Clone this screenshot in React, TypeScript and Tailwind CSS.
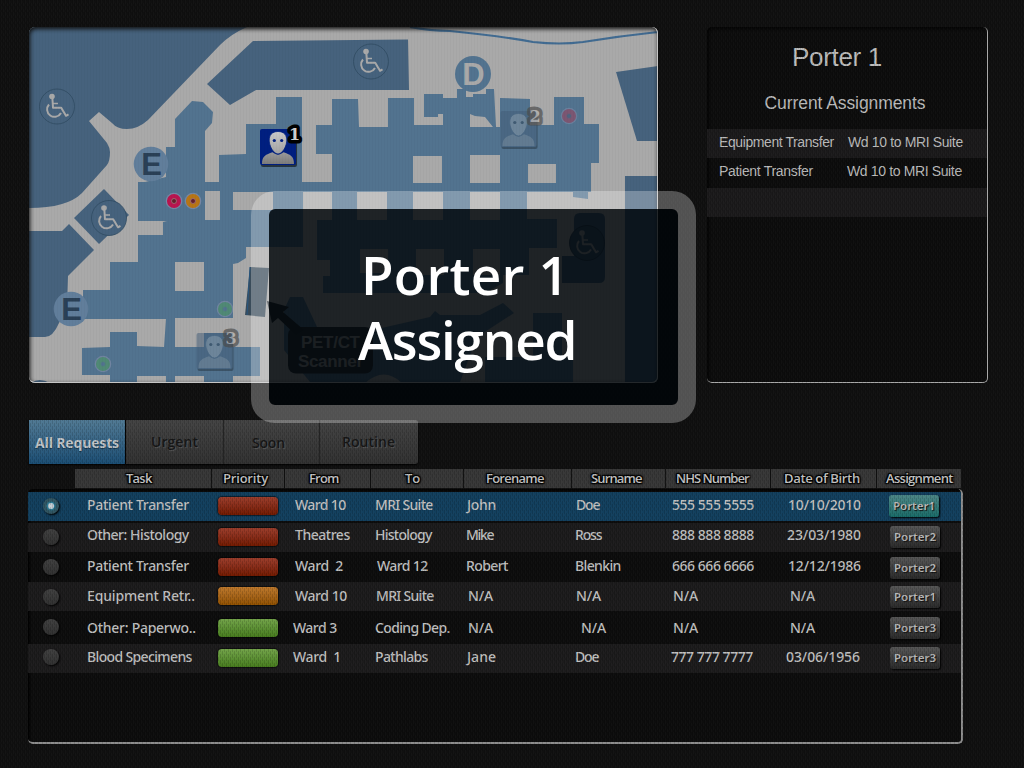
import { useLayoutEffect, useRef, useState } from "react";

/** Text whose tracking is adjusted so that it fills `w` pixels. */
function Fit({ text, w, className = "" }: { text: string; w: number; className?: string }) {
  const ref = useRef<HTMLSpanElement>(null);
  const [tracking, setTracking] = useState(0);
  useLayoutEffect(() => {
    const el = ref.current;
    if (!el) return;
    el.style.letterSpacing = "0px";
    const natural = el.getBoundingClientRect().width;
    setTracking((w - natural) / Math.max(1, text.length - 0.5));
    el.style.letterSpacing = "";
  }, [text, w]);
  return (
    <span ref={ref} className={"inline-block whitespace-pre " + className} style={{ letterSpacing: tracking + "px" }}>
      {text}
    </span>
  );
}

const sans = "font-['Open_Sans','Noto_Sans',sans-serif]";
const arial = "font-['Liberation_Sans',Arial,sans-serif]";

function Wheelchair({ x, y, fill, color, ring }: { x: number; y: number; fill: string; color: string; ring: string }) {
  return (
    <g transform={`translate(${x} ${y})`} fill="none" stroke={color}>
      <circle r="17.5" fill={fill} stroke={ring} strokeWidth="0.8" />
      <circle cx="-5" cy="-10" r="2.8" fill={color} stroke="none" />
      <path d="M-4.6 -8 L-4 1.2 H4.2 L9 9.3 L11.5 7.8" strokeWidth="2" strokeLinejoin="round" />
      <path d="M-4.5 -3 H1" strokeWidth="1.6" />
      <path d="M-8 -2 A7.4 7.4 0 1 0 4 6.5" strokeWidth="2" />
    </g>
  );
}

function Porter({ x, y, n, active = false }: { x: number; y: number; n: string; active?: boolean }) {
  const bg = active ? "#001f80" : "#435d78";
  return (
    <g transform={`translate(${x} ${y})`}>
      <g opacity={active ? 1 : 0.5}>
        <rect x="1" y="2" width="36" height="36" rx="2" fill="#000" opacity="0.55" />
        <rect width="36" height="36" rx="2" fill={bg} />
        <path
          d="M2 35 C2 27 6 25.500 12.500 23.300 Q18 28 23.500 23.300 C30 25.500 34 27 34 35Z"
          fill={active ? "url(#body)" : "#738494"}
        />
        <path
          d="M18 2.500 C24 2.500 27 6 26.800 12 C26.600 16 24.500 20.500 22 23 Q18 27 14 23 C11.500 20.500 9.400 16 9.200 12 C9 6 12 2.500 18 2.500Z"
          fill={active ? "url(#face)" : "#8897a5"}
          stroke={bg}
          strokeWidth="0.800"
        />
        <circle cx="14.300" cy="11.500" r="1.600" fill={active ? "#001f80" : "#2d4257"} />
        <circle cx="21.700" cy="11.500" r="1.600" fill={active ? "#001f80" : "#2d4257"} />
      </g>
      <g opacity={active ? 1 : 0.68}>
        <text
          x="34.500"
          y="11"
          textAnchor="middle"
          fontFamily="DejaVu Serif"
          fontWeight="bold"
          fontSize="16"
          fill={active ? "#d0d0d0" : "#b5b5b5"}
          stroke={active ? "#000" : "#4c4c4c"}
          strokeWidth="7"
          strokeLinejoin="round"
          paintOrder="stroke"
        >
          {n}
        </text>
      </g>
    </g>
  );
}

function Dot({ x, y, ring, core, hub = "#a7757c", opacity = 1 }: { x: number; y: number; ring: string; core: string; hub?: string; opacity?: number }) {
  return (
    <g opacity={opacity}>
      <circle cx={x} cy={y} r="8.300" fill="#c9b6d8" opacity="0.300" />
      <circle cx={x} cy={y} r="4.800" fill={core} stroke={ring} strokeWidth="4.500" />
      <circle cx={x} cy={y} r="2.500" fill="none" stroke={hub} strokeWidth="0.800" />
    </g>
  );
}

function Letter({ x, y, c, r = 17.300, bg, fg }: { x: number; y: number; c: string; r?: number; bg: string; fg: string }) {
  return (
    <g>
      <circle cx={x} cy={y} r={r} fill={bg} />
      <text x={x + 0.5} y={y + 11} textAnchor="middle" fontFamily="Liberation Sans" fontWeight="bold" fontSize="31" fill={fg}>
        {c}
      </text>
    </g>
  );
}

function FloorMap() {
  const land = "#a9a9a9";
  const mid = "#52738f";
  const dark = "#46627d";
  return (
    <svg className="block h-full w-full" viewBox="29 27 629 356" preserveAspectRatio="none">
      <defs>
        <linearGradient id="face" x1="0" y1="0" x2="0" y2="1">
          <stop offset="0" stopColor="#c9c9c9" />
          <stop offset="1" stopColor="#a2a2a2" />
        </linearGradient>
        <linearGradient id="body" x1="0" y1="0" x2="0" y2="1">
          <stop offset="0" stopColor="#9b9b9b" />
          <stop offset="1" stopColor="#7b7b7b" />
        </linearGradient>
      </defs>
      <rect x="29" y="27" width="629" height="356" fill={land} />
      <path d="M29 27H247Q231 34 220 45L148 120Q138 129 127 129Q117 129 112 123L99 112L89 121L107 143Q110 148 110 152Q110 161 107 165L82 193Q67 208 29 208Z" fill={dark} />
      <path d="M207 84L253 41L408 39.500L409 90H256L230 105Z" fill={dark} />
      <path d="M74 218L104 189L129 215L99 244Z" fill={dark} />
      <path d="M29 231H62L69 224L94 250L68 276L67 308L59 323Q53 337 45 337H29Z" fill={dark} />
      <path d="M31 383Q39 377 50 383Z" fill={dark} />
      <path d="M410 27Q430 31 450 31Q500 36 533 42Q560 45 583 42Q620 36 658 32" fill="none" stroke="#416b91" strokeWidth="2.200" />
      <path d="M616 72L658 66V141H637Z" fill={dark} />
      <path d="M625 176H658V383H625Z" fill={dark} />
      <path
        d="M175 119L192 101L203 102L213 112L212 123L205 131V182H219V155L246 154V124H276V97H302V182H332V154H316V125H332V99H358L359 127H388V98H414V125H443V114H438V117H424V94H443V98H457V89H466V97H473V94H486V89H494L496 127H500V98L530 99V125H554V97H584V124H599V163H591V192H588V199L573 197V192H527V219H557V248H529V275H503V283L485 293H323V276H330V260H317V220H332V192H303V247H246V258L238 263L233 264V318H175V347H204V333H233V347H260V376H233V383H204V376H175V383H166V376H137V383H110V375H82V348L110 347V332H137V346L164 347L166 319H83V290H110V262H138V235H163V222L167 221H138V182H145L166 177V147H175Z"
        fill={mid}
      />
      <g fill={land}>
        <path d="M205 191H220V220H205ZM175 262H204V291H175ZM233 192H273V210H233ZM413 156H442V183H413ZM470 155H500V183H470ZM528 164H556V183H528Z" />
        <path d="M470 114L475 116L485 117L493 127H470Z" />
        <path d="M357 192H387V220H357ZM413 192H443V220H413ZM470 192H500V220H470ZM360 249H388V273H360ZM416 249H444V275H416ZM473 249H500V275H473Z" />
      </g>
      <path d="M250 267L269 268L265 317L245 315Z" fill="#3a4c5a" />
      <path d="M250 267L247 315" stroke="#28567f" strokeWidth="1" />
      <path d="M290 297H303L317 327L373 330L430 317L435 311L440 315H480L503 303L514 313L477 337L460 382H310L284 350V310Z" fill={mid} />
      <path d="M533 313H562V357H573V382H485V357H533Z" fill={mid} />
      <path d="M365 383Q384 366 402 383Z" fill={land} />
      <rect x="288" y="327" width="85" height="46.500" rx="8" fill="#2a3036" />
      <path d="M267 301L289 307L283 312L304 330L296 335L278 318L272 323Z" fill="#22292e" />
      <g fontFamily="Liberation Sans" fontWeight="bold" fontSize="17" fill="#989898">
        <text x="301" y="348" textLength="59">PET/CT</text>
        <text x="298" y="367" textLength="65">Scanner</text>
      </g>
      <path d="M580 213H599Q605 213 605 219V277Q605 283 599 283H562V256H574V219Q574 213 580 213Z" fill={dark} />
      <Wheelchair x={57} y={106.500} fill="#46627d" ring="#304b62" color="#a9a9a9" />
      <Wheelchair x={371} y={61.500} fill="#46627d" ring="#304b62" color="#a9a9a9" />
      <Wheelchair x={109} y={218} fill="#46627d" ring="#304b62" color="#a9a9a9" />
      <Wheelchair x={587} y={243} fill="#3b546c" ring="#26394a" color="#a0a0a0" />
      <Letter x={151} y={164} c="E" bg="#617e9b" fg="#2a4056" />
      <Letter x={71} y={309} c="E" bg="#617e9b" fg="#2a4056" />
      <Letter x={473} y={74} c="D" r={18} bg="#52738f" fg="#a9a9a9" />
      <Dot x={174} y={201} ring="#b9144f" core="#63202c" />
      <Dot x={193} y={201} ring="#b77516" core="#63202c" />
      <Dot x={569} y={116} ring="#8f4a66" core="#4b5e7c" hub="#86506a" opacity={0.700} />
      <Dot x={225} y={309} ring="#508d71" core="#52738f" hub="#508d71" opacity={0.850} />
      <Dot x={103} y={364} ring="#508d71" core="#52738f" hub="#508d71" opacity={0.850} />
      <Porter x={260} y={129} n="1" active />
      <Porter x={500.500} y={111} n="2" />
      <Porter x={196.500} y={333} n="3" />
    </svg>
  );
}

const columns = [
  { label: "Task", w: 26, left: 51, col: 137 },
  { label: "Priority", w: 45, left: 11, col: 73 },
  { label: "From", w: 30, left: 24, col: 86 },
  { label: "To", w: 15, left: 34, col: 93 },
  { label: "Forename", w: 58, left: 22, col: 108 },
  { label: "Surname", w: 51, left: 19, col: 94 },
  { label: "NHS Number", w: 73, left: 10, col: 105 },
  { label: "Date of Birth", w: 76, left: 13, col: 106 },
  { label: "Assignment", w: 67, left: 9, col: 84 },
];

type Cell = [text: string, indent: number, width: number];
type Row = { cls: string; text: string; pill: string; btn: string; radio: string; color: "red" | "amber" | "green"; cells: Cell[]; porter: string; on?: boolean };

const rows: Row[] = [
  { cls: "mt-0.5 h-[29px] bg-[#123f5d]", text: "pt-[3px]", pill: "mt-[5px]", btn: "mt-[3px]", radio: "mt-[6px]", color: "red", on: true, porter: "Porter1",
    cells: [["Patient Transfer", 0, 102], ["Ward 10", 2, 51], ["MRI Suite", 0, 58], ["John", 1, 29], ["Doe", 1, 24], ["555 555 5555", 1, 82], ["10/10/2010", 2, 73]] },
  { cls: "mt-0.5 h-[29px] bg-[#1c1b1c]", text: "pt-[2px]", pill: "mt-[5px]", btn: "mt-[3px]", radio: "mt-[6px]", color: "red", porter: "Porter2",
    cells: [["Other: Histology", 0, 102], ["Theatres", 2, 55], ["Histology", 0, 57], ["Mike", 0, 28], ["Ross", 0, 27], ["888 888 8888", 1, 82], ["23/03/1980", 1, 74]] },
  { cls: "h-[30px]", text: "pt-[4px]", pill: "mt-[6px]", btn: "mt-[5px]", radio: "mt-[7px]", color: "red", porter: "Porter2",
    cells: [["Patient Transfer", 0, 102], ["Ward  2", 2, 48], ["Ward 12", 2, 51], ["Robert", 0, 42], ["Blenkin", 0, 46], ["666 666 6666", 1, 82], ["12/12/1986", 2, 73]] },
  { cls: "h-[29px] bg-[#1c1b1c]", text: "pt-[4px]", pill: "mt-[5px]", btn: "mt-[4px]", radio: "mt-[7px]", color: "amber", porter: "Porter1",
    cells: [["Equipment Retr..", 0, 108], ["Ward 10", 2, 52], ["MRI Suite", 1, 58], ["N/A", 2, 25], ["N/A", 1, 25], ["N/A", 2, 25], ["N/A", 4, 25]] },
  { cls: "h-[33px]", text: "pt-[7px]", pill: "mt-[8px]", btn: "mt-[6px]", radio: "mt-[8px]", color: "green", porter: "Porter3",
    cells: [["Other: Paperwo..", 0, 109], ["Ward 3", 0, 44], ["Coding Dep.", 0, 75], ["N/A", 2, 25], ["N/A", 6, 25], ["N/A", 2, 25], ["N/A", 4, 25]] },
  { cls: "h-[29px] bg-[#1c1b1c]", text: "pt-[3px]", pill: "mt-[5px]", btn: "mt-[3px]", radio: "mt-[5px]", color: "green", porter: "Porter3",
    cells: [["Blood Specimens", 0, 105], ["Ward  1", 0, 48], ["Pathlabs", 0, 53], ["Jane", 1, 29], ["Doe", 0, 24], ["777 777 7777", 0, 82], ["03/06/1956", 0, 74]] },
];

const pillColors = {
  red: "from-[#9b3d2b] to-[#711900]",
  amber: "from-[#bd782b] to-[#8f5000]",
  green: "from-[#72a349] to-[#467b1d]",
};

function TextCell({ cell, pad }: { cell: Cell; pad: string }) {
  return (
    <div className={pad} style={{ marginLeft: cell[1] }}>
      <Fit text={cell[0]} w={cell[2]} />
    </div>
  );
}

export default function App() {
  return (
    <div className={"relative h-[768px] w-[1024px] overflow-hidden bg-[#101010] " + sans}>
      <div className="flex justify-between pt-[27px] pr-9 pl-[29px]">
        <div className="h-[356px] w-[629px] overflow-hidden rounded-md">
          <FloorMap />
        </div>
        <section className={"h-[356px] w-[281px] rounded-[5px] border-r border-b border-[#a9a9a9] bg-[#0d0d0d] text-[#bcbcbc] shadow-[inset_2px_2px_3px_#050505] " + arial}>
          <div className="flex h-[102px] flex-col items-center pt-4 pr-5">
            <h1 className="text-[26px] leading-7">
              <Fit text="Porter 1" w={90} />
            </h1>
            <h2 className="mt-[22px] ml-4 text-[17.5px] leading-5">
              <Fit text="Current Assignments" w={161} />
            </h2>
          </div>
          <div className="grid h-[29px] grid-cols-[129px_1fr] justify-items-start bg-[#1b1a1b] pt-[3px] pl-3 text-[14px] leading-5">
            <Fit text="Equipment Transfer" w={115} />
            <Fit text="Wd 10 to MRI Suite" w={115} />
          </div>
          <div className="grid h-[30px] grid-cols-[128px_1fr] justify-items-start pt-[3px] pl-3 text-[14px] leading-5">
            <Fit text="Patient Transfer" w={94} />
            <Fit text="Wd 10 to MRI Suite" w={115} />
          </div>
          <div className="h-[29px] bg-[#1b1a1b]" />
        </section>
      </div>

      <nav className="mt-[37px] ml-[29px] flex h-11 w-[389px] overflow-hidden rounded-r-[3px] bg-gradient-to-b from-[#434343] to-[#313131] text-[14px] leading-5 font-semibold text-[#161616] shadow-[0_1px_2px_#000] [text-shadow:1px_1px_1px_#575757]">
        <div className="w-[97px] border-r border-black bg-gradient-to-b from-[#507993] to-[#1a4d73] pt-[13px] pl-1.5 font-bold text-[#c0c5c9] [text-shadow:0_1px_1px_#17354a]">
          <Fit text="All Requests" w={84} />
        </div>
        <div className="w-[98px] border-r border-[#222] pt-3 pl-[25px]">
          <Fit text="Urgent" w={47} />
        </div>
        <div className="w-[96px] border-r border-[#222] pt-[13px] pl-7">
          <Fit text="Soon" w={33} />
        </div>
        <div className="flex-1 pt-3 pl-[22px]">
          <Fit text="Routine" w={53} />
        </div>
      </nav>

      <div className="mt-[5px] ml-[75px] flex h-[19px] w-[886px] bg-[#373737] text-[13px] leading-[19px] font-semibold text-[#c4c4c4] [text-shadow:1px_1px_1px_#000,-1px_-1px_1px_#000,1px_-1px_1px_#000,-1px_1px_1px_#000,0_0_3px_#000,0_0_3px_#000]">
        {columns.map((c) => (
          <div key={c.label} className="shrink-0 border-r border-[#101010] last:border-r-0" style={{ width: c.col, paddingLeft: c.left }}>
            <Fit text={c.label} w={c.w} />
          </div>
        ))}
      </div>

      <div className="mt-px ml-7 h-[255px] w-[935px] rounded-[5px] border-r-2 border-b-2 border-[#8c8c8c] bg-[#0d0d0d] pt-px font-['Noto_Sans','Open_Sans',sans-serif] text-[14px] leading-5 font-medium text-[#c0c0c0] shadow-[inset_2px_2px_2px_#030303]">
        {rows.map((r, i) => (
          <div key={i} className={"grid w-[933px] grid-cols-[59px_131px_75px_82px_91px_109px_96px_115px_103px_72px] " + r.cls}>
            <div className={"ml-[15px] flex size-4 items-center justify-center rounded-full shadow-[1px_1px_2px_#000] " + (r.on ? "bg-[#315562] " : "bg-gradient-to-b from-[#404040] to-[#303030] ") + r.radio}>
              {r.on && <span className="size-[6px] rounded-full bg-[#c4ced4] shadow-[0_0_2px_1px_#278cae]" />}
            </div>
            <TextCell cell={r.cells[0]} pad={r.text} />
            <div className={"h-[18px] w-[60px] rounded-[4px] bg-gradient-to-b shadow-[0_0_1px_1px_#0008] " + pillColors[r.color] + " " + r.pill} />
            {r.cells.slice(1).map((cell, j) => (
              <TextCell key={j} cell={cell} pad={r.text} />
            ))}
            <div className={"h-[22px] w-[50px] rounded-[3px] bg-gradient-to-b pl-1 text-[11.5px] leading-[22px] font-semibold text-[#b9b9b9] shadow-[1px_1px_2px_#000] [text-shadow:1px_1px_1px_#111] " + (r.on ? "from-[#4b8585] to-[#176b68] " : "ml-px from-[#565656] to-[#292929] ") + r.btn}>
              <Fit text={r.porter} w={42} />
            </div>
          </div>
        ))}
      </div>

      <svg className="pointer-events-none absolute inset-0 h-full w-full">
        <defs>
          <pattern id="weave" width="4" height="6" patternUnits="userSpaceOnUse">
            <path d="M0 0H1V4H0ZM2 3H3V6H2ZM2 0H3V1H2Z" fill="#000" opacity="0.130" />
            <path d="M1 0H2V4H1ZM3 3H4V6H3Z" fill="#fff" opacity="0.016" />
          </pattern>
          <pattern id="lines" width="3" height="3" patternUnits="userSpaceOnUse">
            <path d="M0 0H1V3H0Z" fill="#000" opacity="0.025" />
          </pattern>
        </defs>
        <path d="M0 0H1024V768H0ZM29 27V383H658V27Z" fill="url(#weave)" fillRule="evenodd" />
        <rect x="29" y="27" width="629" height="356" fill="url(#lines)" />
      </svg>
      <div className="pointer-events-none absolute top-[27px] left-[29px] h-[356px] w-[629px] rounded-md border-r border-b border-[#c5c5c5] shadow-[inset_1px_2px_4px_#111]" />

      <div role="dialog" className="absolute top-[191px] left-[251px] h-[232px] w-[445px] rounded-[24px] border-[18px] border-white/28 bg-[#000508]/82 bg-clip-padding pt-[33px] text-[53px] leading-[65px] font-semibold text-white">
        <div className="pl-[92px]">
          <Fit text="Porter 1" w={208} />
        </div>
        <div className="pl-[89px]">
          <Fit text="Assigned" w={219} />
        </div>
      </div>
    </div>
  );
}
